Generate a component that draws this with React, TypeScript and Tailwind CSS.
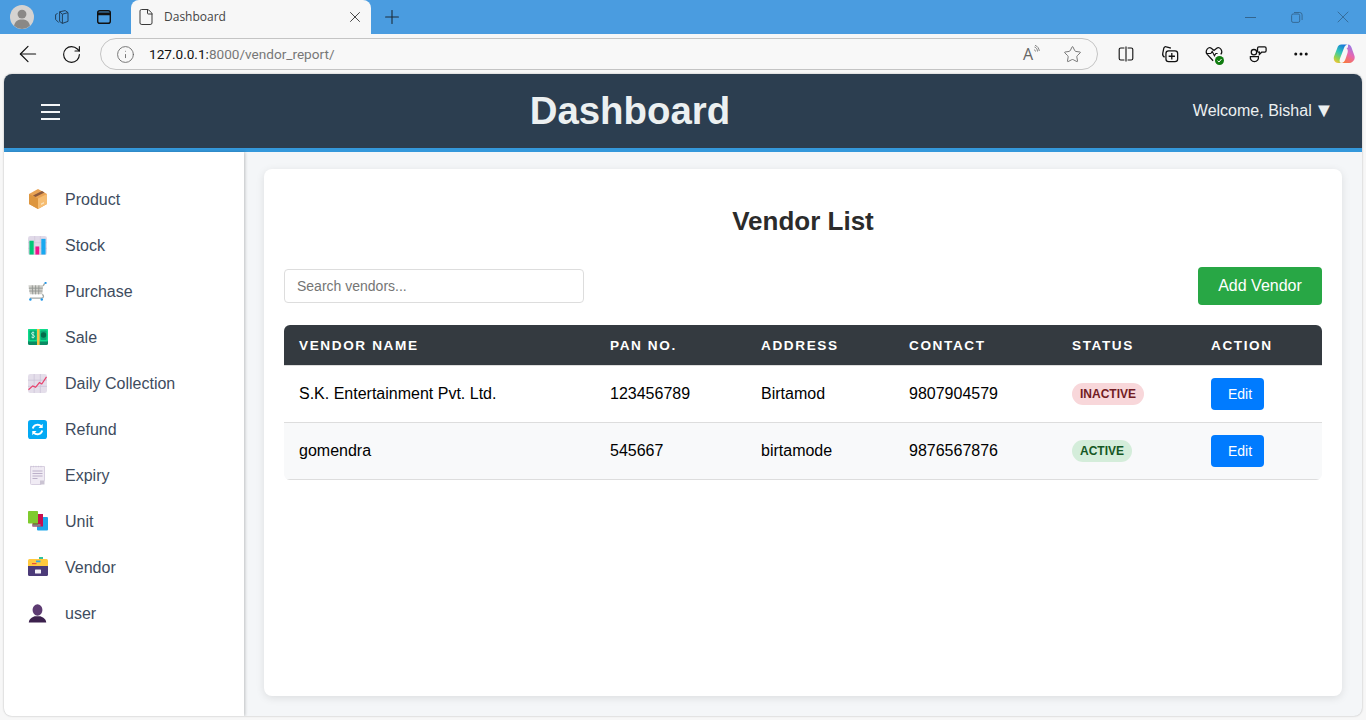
import { ArrowLeft, File, Info, MoreHorizontal, Plus, RotateCw, Star, X } from "lucide-react"
import type { ReactNode } from "react"

function Svg({ children, size = 19, className }: { children: ReactNode; size?: number; className?: string }) {
  return (
    <svg width={size} height={size} viewBox="0 0 20 20" fill="none" className={className}>
      {children}
    </svg>
  )
}

function Avatar() {
  return (
    <Svg size={24}>
      <circle cx="10" cy="10" r="10" fill="#d5d3d1" />
      <circle cx="10" cy="7.600" r="3.700" fill="#8a8886" />
      <path d="M3.400 17.200c.6-3.600 3.200-5.200 6.600-5.200s6 1.600 6.600 5.200A10 10 0 0 1 10 20a10 10 0 0 1-6.600-2.800z" fill="#8a8886" />
    </Svg>
  )
}

function ProductIcon() {
  return (
    <Svg size={20}>
      <path d="M10 0 1 5v10l9 5 9-5V5z" fill="#e9a354" />
      <path d="M10 9.500V20l9-5V5z" fill="#f6bd72" />
      <path d="M1 5l9 4.500V20l-9-5z" fill="#dd963f" />
      <path d="M5 6.500 14 2l2.500 1.400-9 4.500z" fill="#8d5a3c" />
      <path d="M13 16l3-1.600v-1.500l-3 1.600z" fill="#fbe3bd" />
    </Svg>
  )
}

function StockIcon() {
  return (
    <Svg>
      <rect width="20" height="20" rx="2.500" fill="#e0d9e8" />
      <path d="M0 7h20M0 13h20M7 0v20M13 0v20" stroke="#cfc6da" strokeWidth=".7" />
      <rect x="1.500" y="5" width="4.500" height="14.500" fill="#00c878" />
      <rect x="7.800" y="11" width="4" height="8.500" fill="#f0148c" />
      <rect x="14" y="3" width="4.500" height="16.500" fill="#18a8f0" />
    </Svg>
  )
}

function CartIcon() {
  return (
    <Svg>
      <path d="M.5 3.500h15.500l-1 9.500H2z" fill="#cfcfca" />
      <path d="M.8 6.500H15.500M1.200 9.500H15.200M4.500 3.500l.5 9.500M8 3.500V13M11.500 3.500 11.200 13" stroke="#8f938f" strokeWidth=".9" />
      <path d="M16 4 17.500 1.500M15 13c2 1.200 1.700 4-.8 4H2" stroke="#a3a8a6" strokeWidth="1.400" />
      <rect x="17.500" y="0" width="2" height="2" fill="#2196e8" />
      <circle cx="2.500" cy="18.500" r="1.300" fill="#2196e8" />
      <circle cx="14.500" cy="18.500" r="1.300" fill="#2196e8" />
    </Svg>
  )
}

function SaleIcon() {
  return (
    <Svg size={20}>
      <rect y="2" width="20" height="16" rx="1.500" fill="#0b8a62" />
      <rect y="2" width="20" height="12.500" rx="1" fill="#0fdc8c" />
      <rect x="1.500" y="3.500" width="7" height="9.500" rx=".8" fill="#0aa873" />
      <rect x="12.500" y="3.500" width="6" height="9.500" rx=".8" fill="#0aa873" />
      <circle cx="15.500" cy="8" r="2.700" fill="#066b4c" />
      <path d="M6.300 5.800c-.8-.8-2.800-.6-2.800.7 0 1.800 3 1 3 2.900 0 1.300-2.200 1.500-3.100.6M5 4.700v6.700" stroke="#d6fff0" strokeWidth=".8" />
      <rect x="9" y="2" width="2.600" height="16" fill="#f6c244" />
    </Svg>
  )
}

function CollectionIcon() {
  return (
    <Svg>
      <rect width="20" height="20" rx="2.500" fill="#e4deea" />
      <path d="M0 6.500h20M0 13h20M6.500 0v20M13 0v20" stroke="#cbc2d6" strokeWidth=".8" />
      <path d="M.5 16.500 5 12.500l3 1.500 4-5 2.500 1.500L19.500 3" stroke="#e8416c" strokeWidth="1.300" />
    </Svg>
  )
}

function RefundIcon() {
  return (
    <Svg>
      <rect width="20" height="20" rx="3" fill="#03a9f4" />
      <path d="M5 9a5.200 5.200 0 0 1 9-2.200" stroke="#fff" strokeWidth="2" />
      <path d="M15 11a5.200 5.200 0 0 1-9 2.200" stroke="#fff" strokeWidth="2" />
      <path d="M15.500 4v4.500h-4.500zM4.500 16v-4.500h4.500z" fill="#fff" />
    </Svg>
  )
}

function ExpiryIcon() {
  return (
    <Svg size={20}>
      <path d="M2.500 1.500h14v14L13 19.500H3.500a1 1 0 0 1-1-1z" fill="#f0ebf4" stroke="#d8d0e0" />
      <path d="M3 .8v1.500M5.500.8v1.500M8 .8v1.500M10.500.8v1.500M13 .8v1.500" stroke="#c8bed4" strokeWidth=".7" />
      <path d="M4.500 6h10M4.500 8.500h10M4.500 11h10M4.500 13.500h5" stroke="#b5a9c4" strokeWidth=".9" />
      <path d="M12 15.500h4.500v4H12z" fill="#cbc4d3" />
    </Svg>
  )
}

function UnitIcon() {
  return (
    <Svg size={20}>
      <rect x="9" y="6" width="11" height="13.500" rx="1" fill="#1ea7ea" />
      <rect x="4.500" y="3" width="10.500" height="12.500" fill="#c8104f" />
      <rect x="4.500" y="13" width="8" height="2.500" fill="#8d7b89" />
      <rect y="0" width="10" height="12.500" rx=".8" fill="#7fcb2e" />
      <rect x="5" y="12.500" width="5" height="1" fill="#5b8d2a" />
    </Svg>
  )
}

function VendorIcon() {
  return (
    <Svg size={20}>
      <rect x="11" y="0" width="4" height="3" fill="#30c29b" />
      <rect y="2" width="20" height="8" rx="1.500" fill="#ffc93f" />
      <rect x="8" y="3.500" width="4.500" height="1.800" fill="#37a7dd" />
      <rect x="4" y="6" width="4.500" height="1.200" fill="#e4513d" />
      <path d="M0 9h20v8.500a1.500 1.500 0 0 1-1.500 1.500h-17A1.500 1.500 0 0 1 0 17.500z" fill="#4b3a78" />
      <rect x="7" y="12.500" width="6" height="4" rx=".5" fill="#f4f1f8" />
    </Svg>
  )
}

function UserIcon() {
  return (
    <Svg>
      <ellipse cx="10" cy="6.300" rx="5.200" ry="6" fill="#5d3b72" />
      <path d="M.8 19.500c.4-3.800 3.200-5.300 6.200-6.500h6c3 1.200 5.800 2.700 6.200 6.500z" fill="#3c214d" />
    </Svg>
  )
}

const MENU_ITEMS = [
  { name: "Product", icon: ProductIcon },
  { name: "Stock", icon: StockIcon },
  { name: "Purchase", icon: CartIcon },
  { name: "Sale", icon: SaleIcon },
  { name: "Daily Collection", icon: CollectionIcon },
  { name: "Refund", icon: RefundIcon },
  { name: "Expiry", icon: ExpiryIcon },
  { name: "Unit", icon: UnitIcon },
  { name: "Vendor", icon: VendorIcon },
  { name: "user", icon: UserIcon },
]

const VENDORS = [
  { name: "S.K. Entertainment Pvt. Ltd.", pan: "123456789", address: "Birtamod", contact: "9807904579", active: false },
  { name: "gomendra", pan: "545667", address: "birtamode", contact: "9876567876", active: true },
]

const HEADINGS = ["Vendor Name", "PAN No.", "Address", "Contact", "Status", "Action"]

function TabStrip() {
  return (
    <div className="flex h-[34px] shrink-0 items-center bg-[#4a9ce0]">
      <div className="ml-[10px] w-[24px]">
        <Avatar />
      </div>
      <Svg size={16} className="ml-[20px]">
        <path d="M7 3.500 14 2l3.500 2.500v11l-7 2.500-3.500-2.500z" stroke="#1f3b55" strokeWidth="1.200" />
        <path d="M4.500 5.500 2 7v6l4 4M10.500 6.500v11.500M7 3.500l3.500 3 7-2" stroke="#1f3b55" strokeWidth="1.200" />
      </Svg>
      <Svg size={14} className="ml-[27px]">
        <rect x="1" y="1" width="18" height="18" rx="3" stroke="#111" strokeWidth="2" />
        <path d="M1 5.500h18" stroke="#111" strokeWidth="4" />
      </Svg>
      <div className="ml-[20px] flex h-[34px] w-[240px] items-center self-end rounded-t-lg bg-[#f7f7f7] pl-[6px] pr-[7px]">
        <File className="h-[18px] w-[18px] text-[#333]" strokeWidth={1.3} />
        <span className="ml-[9px] flex-1 text-[12px] text-[#444]">Dashboard</span>
        <X className="h-[18px] w-[18px] text-[#333]" strokeWidth={1.2} />
      </div>
      <Plus className="ml-[10px] h-[22px] w-[22px] text-[#1d2c3a]" strokeWidth={1.2} />
      <div className="ml-auto flex items-center pr-[13px]">
        <div className="h-px w-[11px] bg-[#33658f]" />
        <Svg size={12} className="ml-[35px]">
          <rect x="1" y="5" width="13.500" height="14" rx="2.500" stroke="#33658f" strokeWidth="1.500" />
          <path d="M5 2.500h9.500a4 4 0 0 1 4 4V15" stroke="#33658f" strokeWidth="1.500" />
        </Svg>
        <X className="ml-[30px] h-[20px] w-[20px] text-[#33658f]" strokeWidth={1} />
      </div>
    </div>
  )
}

function ReadAloud() {
  return (
    <span className="relative mr-[24px] flex w-[16px] items-center text-[16px] leading-none text-[#666]">
      A
      <svg width="7" height="8" viewBox="0 0 7 8" fill="none" className="absolute -top-[1px] left-[10px]">
        <path d="M1 4.500c1 .6 1.300 1.200 1.500 2M1.500 2c2 .8 2.800 2 3 4.500M2 .3c2.600 1 4 3 4.300 5.700" stroke="#666" strokeWidth=".8" />
      </svg>
    </span>
  )
}

function Toolbar() {
  return (
    <div className="flex h-[40px] shrink-0 items-center bg-[#f7f7f7]">
      <ArrowLeft className="ml-[15px] h-[26px] w-[26px] text-[#111]" strokeWidth={1.1} />
      <RotateCw className="ml-[20px] h-[21px] w-[21px] text-[#111]" strokeWidth={1.3} />
      <div className="ml-[18px] flex h-[32px] w-[998px] items-center rounded-full border border-[#c4c4c4] bg-[#f8f8f8] pl-[15px] pr-[15px]">
        <Info className="h-[19px] w-[19px] text-[#666]" strokeWidth={1.1} />
        <span className="ml-[14px] flex-1 font-['Roboto',sans-serif] text-[13.6px] text-[#777]">
          <span className="text-[#111]">127.0.0.1:</span>8000/vendor_report/
        </span>
        <ReadAloud />
        <Star className="h-[19px] w-[19px] text-[#666]" strokeWidth={1.1} />
      </div>
      <Svg size={16} className="ml-[20px]">
        <path d="M8 2.500H3.500a2 2 0 0 0-2 2v11a2 2 0 0 0 2 2H8M12 2.500h4.500a2 2 0 0 1 2 2v11a2 2 0 0 1-2 2H12M10 .5v19" stroke="#111" strokeWidth="1.400" />
      </Svg>
      <Svg size={18} className="ml-[27px]">
        <path d="M4 13.500C2 12.500 1.500 11 2 9l1-5c.4-1.500 1.500-2.500 3-2l5 1.500" stroke="#111" strokeWidth="1.400" />
        <rect x="5.500" y="6.500" width="13" height="12" rx="3" stroke="#111" strokeWidth="1.400" />
        <path d="M12 9v7M8.500 12.500h7" stroke="#111" strokeWidth="1.400" />
      </Svg>
      <div className="relative ml-[26px] h-[18px] w-[18px]">
        <Svg size={18}>
          <path d="M9 17.500 2.500 10.500C-.5 7 3.500 1 7 3.500l3 2.500 3-2.500c3.500-2.500 7.500 3.500 4.500 7" stroke="#111" strokeWidth="1.400" />
          <path d="M1.500 9.500h5l1.500-2.500 2.500 5 1.500-2.500h2" stroke="#111" strokeWidth="1.200" />
        </Svg>
        <span className="absolute -bottom-[2px] -right-[1px] flex h-[9px] w-[9px] items-center justify-center rounded-full bg-[#107c10]">
          <svg width="7" height="7" viewBox="0 0 7 7" fill="none">
            <path d="M1.500 3.700 3 5l2.500-3" stroke="#fff" strokeWidth="1" />
          </svg>
        </span>
      </div>
      <Svg size={18} className="ml-[26px]">
        <circle cx="5.500" cy="8" r="3" stroke="#111" strokeWidth="1.400" />
        <path d="M1.500 13h9c.5 3-1.500 5.500-4.500 5.500S1 16 1.500 13z" stroke="#111" strokeWidth="1.400" />
        <path d="M11 2h6.500a1.500 1.500 0 0 1 1.500 1.500v3A1.500 1.500 0 0 1 17.500 8H14l-2.500 2.500V8A1.500 1.500 0 0 1 9.500 6.500v-3A1.500 1.500 0 0 1 11 2z" stroke="#111" strokeWidth="1.400" />
      </Svg>
      <MoreHorizontal className="ml-[25px] h-[18px] w-[18px] text-[#111]" strokeWidth={2} />
      <svg width="22" height="22" viewBox="0 0 22 22" className="ml-[23px]">
        <defs>
          <linearGradient id="copilotA" x1="0.700" y1="0" x2="0.200" y2="1">
            <stop offset="0" stopColor="#1674dc" />
            <stop offset=".45" stopColor="#2fc6b8" />
            <stop offset=".8" stopColor="#9bd24a" />
            <stop offset="1" stopColor="#f5c33a" />
          </linearGradient>
          <linearGradient id="copilotB" x1="0.800" y1="0" x2="0.300" y2="1">
            <stop offset="0" stopColor="#8b7cf0" />
            <stop offset=".5" stopColor="#e866b0" />
            <stop offset="1" stopColor="#f9793c" />
          </linearGradient>
        </defs>
        <path d="M8.500 1.500C6 1.500 5 3 4.300 5L1 13.500C0 17 2 20 5 20h3c-1.500-.8-1.800-2.500-1-4.500L11 5c.8-2 2-3.500 4-3.500z" fill="url(#copilotA)" />
        <path d="M15 1.500c2 0 3 1.500 3.500 3l3 8.500c.8 3-.8 5.500-3.500 6.700-1 .3-2 .3-3 .3H7.500c3 0 4-1.500 5-4l2-6c.5-2 .5-3.500-1-5 .5-.3 1-.5 1.500-.5z" fill="url(#copilotB)" />
      </svg>
    </div>
  )
}

function Sidebar() {
  return (
    <aside className="w-[240px] shrink-0 bg-white pt-[25px] shadow-[1px_0_3px_rgba(0,0,0,0.22)]">
      {MENU_ITEMS.map((item) => (
        <div key={item.name} className="flex h-[46px] items-center pl-[24px] text-[16px] text-[#3e4c5e]">
          <span className="-mt-[2px] w-[37px]">
            <item.icon />
          </span>
          {item.name}
        </div>
      ))}
    </aside>
  )
}

function VendorTable() {
  return (
    <div className="overflow-hidden rounded-md">
      <table className="w-full table-fixed border-separate border-spacing-0 text-[16px] text-black">
        <colgroup>
          <col className="w-[311px]" />
          <col className="w-[151px]" />
          <col className="w-[148px]" />
          <col className="w-[163px]" />
          <col className="w-[139px]" />
          <col className="w-[126px]" />
        </colgroup>
        <thead>
          <tr className="bg-[#343a40] text-left text-[13.6px] uppercase tracking-[1.6px] text-white">
            {HEADINGS.map((heading) => (
              <th key={heading} className="h-[41px] border-b border-[#dddddd] pl-[15px] pt-[2px] font-bold">
                {heading}
              </th>
            ))}
          </tr>
        </thead>
        <tbody>
          {VENDORS.map((vendor, i) => (
            <tr key={vendor.name} className={i === 1 ? "bg-[#f8f9fa]" : "bg-white"}>
              <td className="h-[57px] border-b border-[#dddddd] pl-[15px]">{vendor.name}</td>
              <td className="border-b border-[#dddddd] pl-[15px]">{vendor.pan}</td>
              <td className="border-b border-[#dddddd] pl-[15px]">{vendor.address}</td>
              <td className="border-b border-[#dddddd] pl-[15px]">{vendor.contact}</td>
              <td className="border-b border-[#dddddd] pb-[2px] pl-[15px]">
                <span
                  className={
                    "inline-block rounded-full px-[8px] py-[3px] align-middle text-[12px] leading-[16px] font-bold " +
                    (vendor.active ? "bg-[#d4edda] text-[#155724]" : "bg-[#f8d7da] text-[#721c24]")
                  }
                >
                  {vendor.active ? "ACTIVE" : "INACTIVE"}
                </span>
              </td>
              <td className="border-b border-[#dddddd] pl-[15px]">
                <button type="button" className="block h-[32px] w-[53px] rounded bg-[#007bff] pl-[5px] text-[14px] text-white">
                  Edit
                </button>
              </td>
            </tr>
          ))}
        </tbody>
      </table>
    </div>
  )
}

export default function App() {
  return (
    <div className="flex h-[720px] w-[1366px] flex-col overflow-hidden bg-[#f7f7f7] font-['Liberation_Sans',Arial,sans-serif]">
      <div className="font-['Open_Sans',sans-serif]">
        <TabStrip />
        <Toolbar />
      </div>
      <div className="mx-[4px] mb-[4px] flex min-h-0 flex-1 flex-col overflow-hidden rounded-lg bg-[#f4f6f8] shadow-[0_0_2px_rgba(0,0,0,0.3)]">
        <header className="flex h-[78px] shrink-0 items-center justify-between border-b-[4px] border-[#3498db] bg-[#2c3e50] px-[30px] text-[#ecf0f1]">
          <div className="mt-[2px] flex w-[33px] flex-col items-center gap-[5px]">
            <span className="h-[2px] w-[19px] bg-[#f4f6f8]" />
            <span className="h-[2px] w-[19px] bg-[#f4f6f8]" />
            <span className="h-[2px] w-[19px] bg-[#f4f6f8]" />
          </div>
          <h1 className="text-[38.4px] leading-none font-bold">Dashboard</h1>
          <div className="text-[16px]">
            Welcome, Bishal <span className="inline-block scale-125">▼</span>
          </div>
        </header>
        <div className="flex min-h-0 flex-1">
          <Sidebar />
          <main className="flex-1 pb-[20px] pl-[20px] pr-[20px] pt-[17px]">
            <div className="h-full rounded-lg bg-white p-[20px] shadow-[0_2px_8px_rgba(0,0,0,0.1)]">
              <h2 className="mt-[17px] text-center text-[26px] leading-[30px] font-bold text-[#2b2b2b]">Vendor List</h2>
              <div className="mt-[31px] flex items-center justify-between">
                <input
                  placeholder="Search vendors..."
                  className="h-[34px] w-[300px] rounded border border-[#dddddd] px-[12px] text-[14px] placeholder:text-[#757575]"
                />
                <button type="button" className="h-[38px] w-[124px] rounded bg-[#28a745] text-[16px] text-white">
                  Add Vendor
                </button>
              </div>
              <div className="mt-[20px]">
                <VendorTable />
              </div>
            </div>
          </main>
        </div>
      </div>
    </div>
  )
}
